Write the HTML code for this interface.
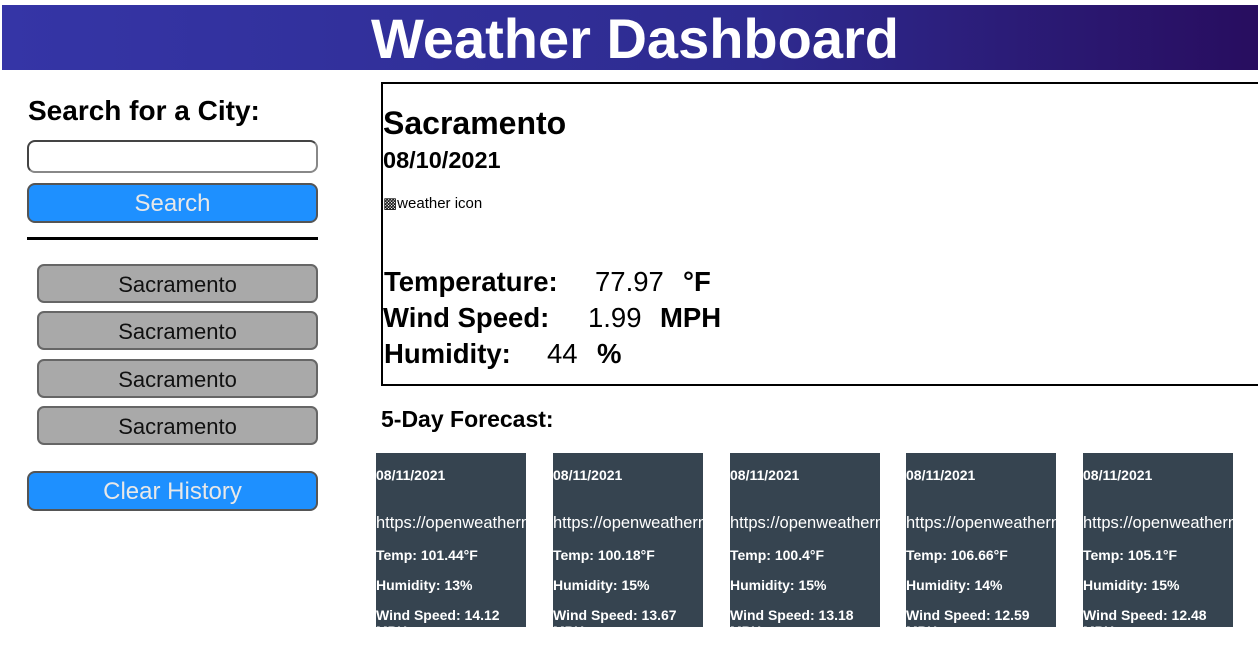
<!DOCTYPE html>
<html><head><style>
body{margin:0;width:1258px;height:660px;position:relative;font-family:"Liberation Sans",Arial,sans-serif;background:#fff;overflow:hidden}
.a{position:absolute;white-space:nowrap}
header{position:absolute;left:2px;top:5px;width:1256px;height:65px;background:linear-gradient(90deg,#3535a6,#2e2b90 60%,#280d5f);color:#fff;font-weight:bold;font-size:56px;text-align:center;line-height:68px;text-indent:10px}
.btn{position:absolute;left:27px;width:287px;height:36px;border:2px solid #555;border-radius:8px;background:#1e90ff;color:#e8e8e8;font-size:24px;text-align:center;line-height:38px}
.hist{position:absolute;left:37px;width:277px;height:35px;border:2px solid #666;border-radius:7px;background:#a9a9a9;color:#111;font-size:22px;text-align:center;line-height:38px}
.card{position:absolute;top:453px;width:150px;height:174px;background:#364450;color:#fff;font-size:14px;font-weight:bold;overflow:hidden;white-space:nowrap}
.card div{position:absolute;left:0px}
.b{font-size:27.5px;font-weight:bold}
.n{font-size:27.5px}
</style></head><body>
<header>Weather Dashboard</header>
<div class="a" style="left:28px;top:95px;font-size:28px;font-weight:bold">Search for a City:</div>
<div class="a" style="left:27px;top:140px;width:287px;height:29px;border:2px solid #444;border-radius:8px;border-right-color:#888;border-bottom-color:#888"></div>
<div class="btn" style="top:183px">Search</div>
<div class="a" style="left:27px;top:237px;width:291px;height:3px;background:#000"></div>
<div class="hist" style="top:264px">Sacramento</div>
<div class="hist" style="top:311px">Sacramento</div>
<div class="hist" style="top:359px">Sacramento</div>
<div class="hist" style="top:406px">Sacramento</div>
<div class="btn" style="top:471px">Clear History</div>
<div class="a" style="left:381px;top:82px;width:890px;height:300px;border:2px solid #000"></div>
<div class="a" style="left:383px;top:105px;font-size:32px;font-weight:bold">Sacramento</div>
<div class="a" style="left:383px;top:147px;font-size:23.5px;font-weight:bold">08/10/2021</div>
<div class="a" style="left:383px;top:194px;font-size:15px">&#9641;weather icon</div>
<div class="a b" style="left:384px;top:266px">Temperature:</div><div class="a n" style="left:595px;top:266px">77.97</div><div class="a b" style="left:683px;top:266px">°F</div>
<div class="a b" style="left:383px;top:302px">Wind Speed:</div><div class="a n" style="left:588px;top:302px">1.99</div><div class="a b" style="left:660px;top:302px">MPH</div>
<div class="a b" style="left:384px;top:338px">Humidity:</div><div class="a n" style="left:547px;top:338px">44</div><div class="a b" style="left:597px;top:338px">%</div>
<div class="a" style="left:381px;top:406px;font-size:23px;font-weight:bold">5-Day Forecast:</div>
<div class="card" style="left:376px"><div style="top:14px">08/11/2021</div><div style="top:61px;font-size:16.5px;font-weight:normal">https://openweathermap.org</div><div style="top:94px">Temp: 101.44°F</div><div style="top:124px">Humidity: 13%</div><div style="top:154px">Wind Speed: 14.12<br>MPH</div></div>
<div class="card" style="left:553px"><div style="top:14px">08/11/2021</div><div style="top:61px;font-size:16.5px;font-weight:normal">https://openweathermap.org</div><div style="top:94px">Temp: 100.18°F</div><div style="top:124px">Humidity: 15%</div><div style="top:154px">Wind Speed: 13.67<br>MPH</div></div>
<div class="card" style="left:730px"><div style="top:14px">08/11/2021</div><div style="top:61px;font-size:16.5px;font-weight:normal">https://openweathermap.org</div><div style="top:94px">Temp: 100.4°F</div><div style="top:124px">Humidity: 15%</div><div style="top:154px">Wind Speed: 13.18<br>MPH</div></div>
<div class="card" style="left:906px"><div style="top:14px">08/11/2021</div><div style="top:61px;font-size:16.5px;font-weight:normal">https://openweathermap.org</div><div style="top:94px">Temp: 106.66°F</div><div style="top:124px">Humidity: 14%</div><div style="top:154px">Wind Speed: 12.59<br>MPH</div></div>
<div class="card" style="left:1083px"><div style="top:14px">08/11/2021</div><div style="top:61px;font-size:16.5px;font-weight:normal">https://openweathermap.org</div><div style="top:94px">Temp: 105.1°F</div><div style="top:124px">Humidity: 15%</div><div style="top:154px">Wind Speed: 12.48<br>MPH</div></div>
</body></html>
